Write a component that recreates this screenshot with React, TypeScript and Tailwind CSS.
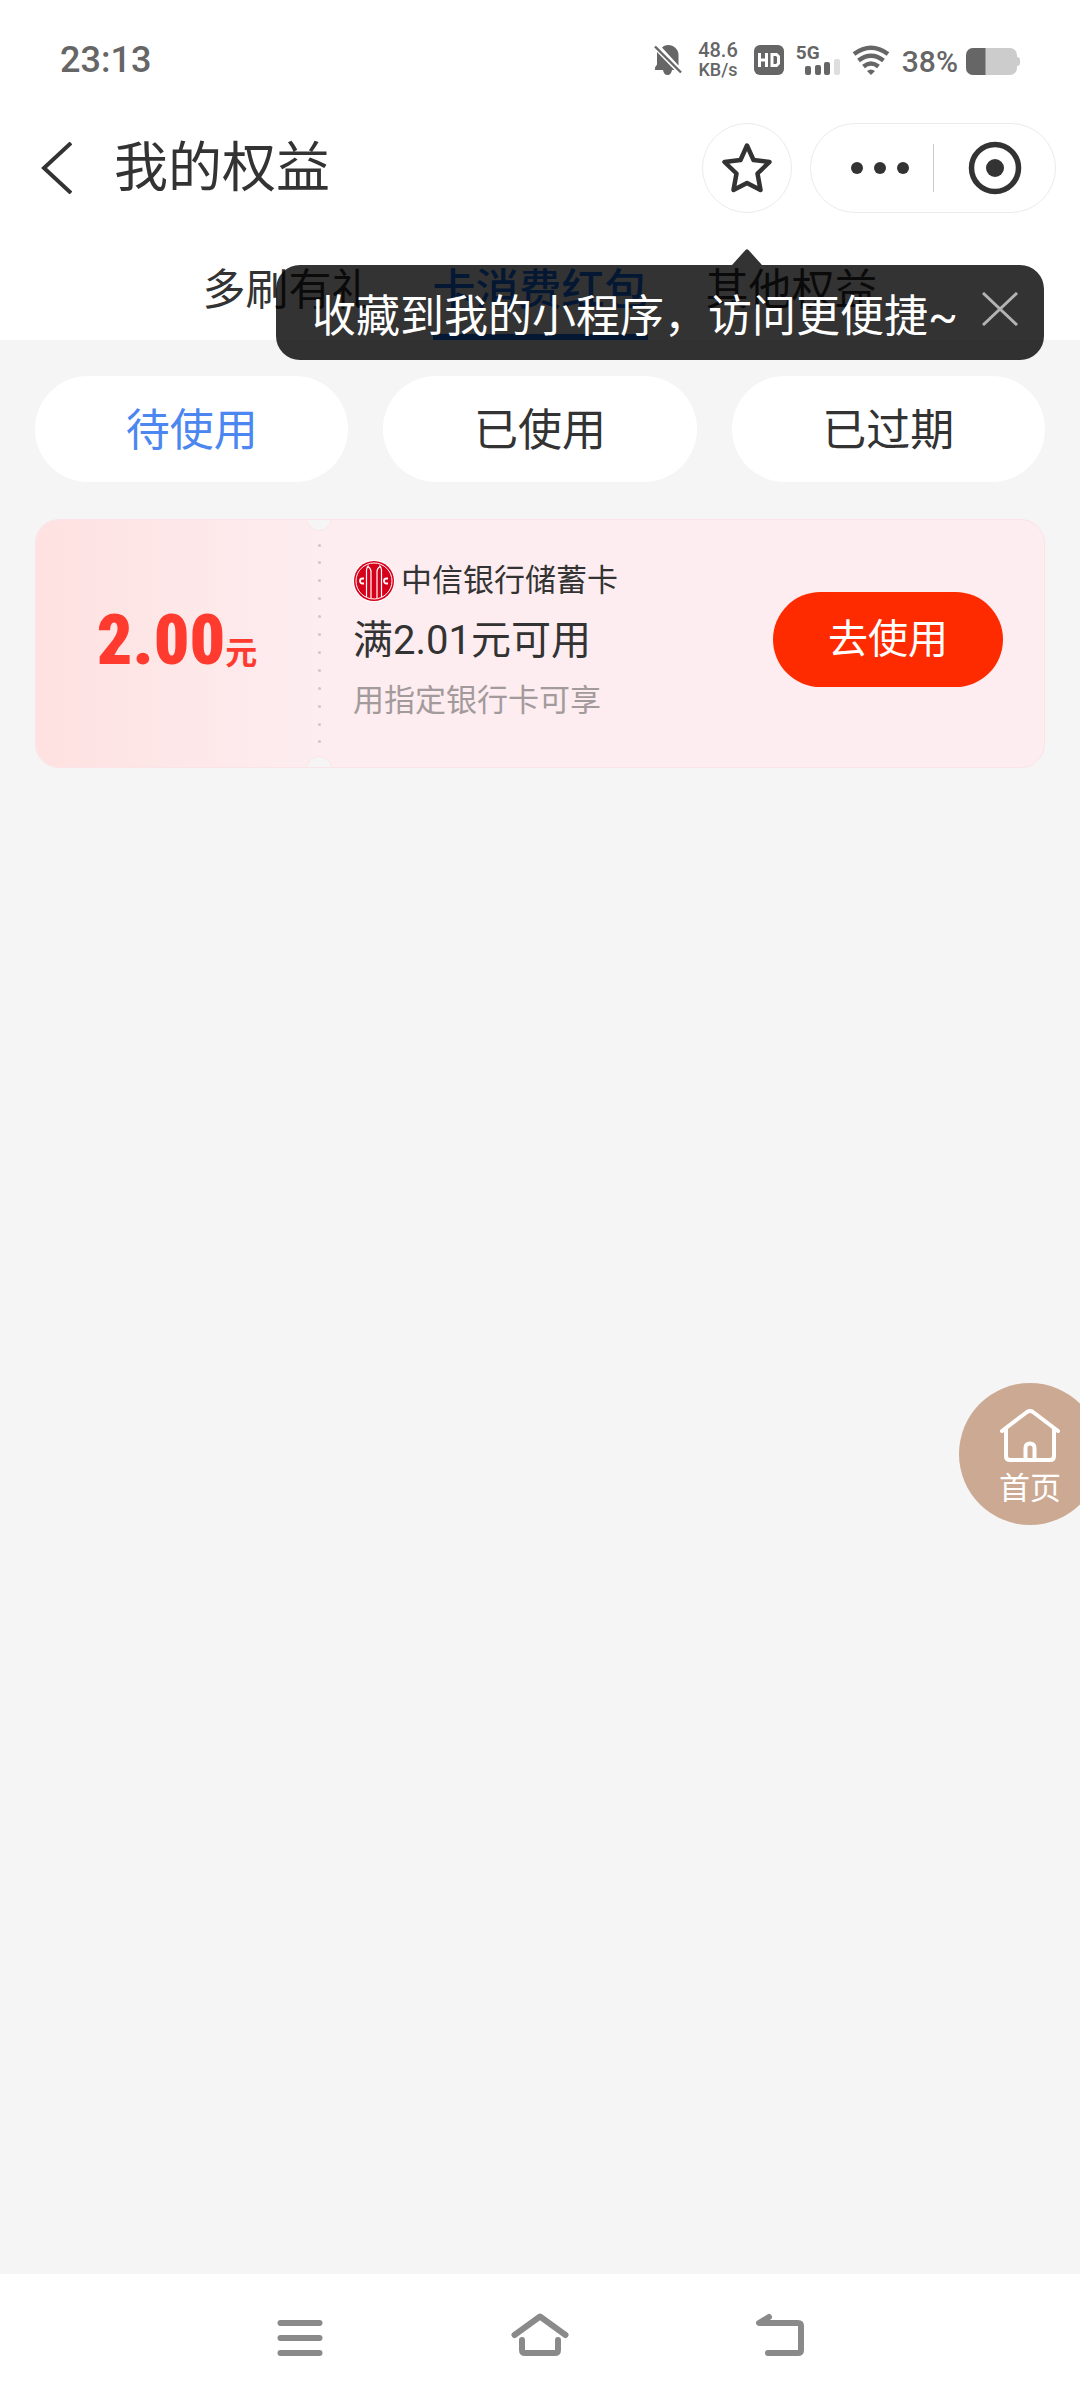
import React from "react";

const tabs = ["多刷有礼", "卡消费红包", "其他权益"];
const filters = ["待使用", "已使用", "已过期"];

function StatusBar() {
  return (
    <div className="flex h-[120px] items-center justify-between px-[60px] text-[#666]">
      <div className="text-[36px] font-medium leading-[36px]">23:13</div>
      <div className="flex items-center">
        <svg className="h-[32px] w-[28px]" viewBox="0 0 28 32" fill="currentColor" aria-hidden="true">
          <path d="M8 3.500C9.500 2 11.500 1 14 1c6 0 10.500 4.500 10.500 10v10.500Z" />
          <path d="M3 8 20.500 26H18c-.5 3-2 5-4.500 5S9.500 29 9 26H1v-2.500l2-3Z" />
          <path d="M1 2.500 27 28.500" stroke="currentColor" strokeWidth="2.400" />
        </svg>
        <div className="ml-4 flex flex-col items-center font-medium">
          <span className="text-[20px] leading-[20px]">48.6</span>
          <span className="text-[18px] leading-[20px]">KB/s</span>
        </div>
        <svg className="ml-4 h-[30px] w-[30px]" viewBox="0 0 30 30" aria-hidden="true">
          <rect width="30" height="30" rx="6" fill="currentColor" />
          <path d="M5.500 8v14M12.500 8v14M5.500 15h7M18 9.500h4.500l2 2v7l-2 2H18Z" fill="none" stroke="#fff" strokeWidth="3" />
        </svg>
        <div className="relative ml-3 h-[30px] w-[44px]">
          <span className="absolute left-0 top-0 text-[19px] font-bold leading-[16px]">5G</span>
          <svg className="h-[30px] w-[44px]" viewBox="0 0 44 30" fill="currentColor" aria-hidden="true">
            <rect x="9" y="21" width="6" height="9" rx="2" />
            <rect x="19" y="20" width="6" height="10" rx="2" />
            <rect x="28" y="17" width="6" height="13" rx="2" />
            <rect x="38" y="14" width="6" height="16" rx="2" fill="#dedede" />
          </svg>
        </div>
        <svg className="ml-3 h-[30px] w-[38px]" viewBox="0 0 38 30" fill="none" stroke="currentColor" strokeWidth="4.400" aria-hidden="true">
          <path d="M2 9Q19-3.500 36 9M6.500 15.500q12.500-9.500 25 0M11.500 21.500q7.500-6 15 0" />
          <path d="M15 26q4-3 8 0l-4 4Z" fill="currentColor" stroke="none" />
        </svg>
        <span className="ml-3 mt-1 text-[30px] font-medium leading-[30px]">38%</span>
        <svg className="ml-2 mt-1 h-[28px] w-[54px]" viewBox="0 0 54 28" aria-hidden="true">
          <rect x="48" y="9" width="6" height="9" rx="3" fill="#ccc" />
          <rect y="0" width="51" height="27" rx="7" fill="#ccc" />
          <path d="M19.500 0H7a7 7 0 0 0-7 7v13a7 7 0 0 0 7 7h12.500Z" fill="currentColor" />
        </svg>
      </div>
    </div>
  );
}

function Tip() {
  return (
    <div role="status" className="absolute right-9 top-[265px] z-10 flex h-[95px] items-center rounded-[24px] bg-black/80 pl-9 pr-[26px]">
      <svg className="absolute -top-4 right-[282px] h-4 w-[30px]" viewBox="0 0 30 16" aria-hidden="true">
        <path d="M0 16 13.500 1q1.500-1.500 3 0L30 16Z" fill="#000" fillOpacity=".8" />
      </svg>
      <p className="mt-2 whitespace-nowrap text-[44px] leading-[60px] text-white">收藏到我的小程序，访问更便捷~</p>
      <button type="button" aria-label="关闭" className="-mt-2 ml-6 text-[#b3b3b3]">
        <svg className="h-[34px] w-[36px]" viewBox="0 0 36 34" fill="none" stroke="currentColor" strokeWidth="3" aria-hidden="true">
          <path d="m1 1 34 32M35 1 1 33" />
        </svg>
      </button>
    </div>
  );
}

function Header() {
  return (
    <header className="bg-white">
      <StatusBar />
      <div className="mt-[3px] flex h-[90px] items-center pl-10 pr-6">
        <button type="button" aria-label="返回">
          <svg className="h-[52px] w-[32px]" viewBox="0 0 32 52" fill="none" stroke="currentColor" strokeWidth="4" aria-hidden="true">
            <path d="M31 1 4 26l27 25" />
          </svg>
        </button>
        <h1 className="ml-[42px] flex-1 pt-0.5 text-[54px] leading-[72px]">我的权益</h1>
        <button type="button" aria-label="收藏" className="flex size-[90px] items-center justify-center rounded-full border border-[#ebebeb]">
          <svg className="size-[52px]" viewBox="0 0 52 52" fill="none" stroke="currentColor" strokeWidth="4.500" strokeLinejoin="round" aria-hidden="true">
            <path d="m26 3.500 6.500 14.500 16 2-12 11.500L39.500 48 26 41 12.500 48l3-16.500L3.500 20l16-2Z" />
          </svg>
        </button>
        <div className="ml-[18px] flex h-[90px] w-[246px] items-center rounded-full border border-[#ebebeb]">
          <button type="button" aria-label="更多" className="flex w-1/2 justify-center gap-[11px] pl-4">
            <i className="size-[12px] rounded-full bg-[#333]" />
            <i className="size-[12px] rounded-full bg-[#333]" />
            <i className="size-[12px] rounded-full bg-[#333]" />
          </button>
          <i className="h-12 w-px bg-[#ccc]" />
          <button type="button" aria-label="关闭小程序" className="flex flex-1 justify-center">
            <svg className="size-[54px]" viewBox="0 0 54 54" aria-hidden="true">
              <circle cx="27" cy="27" r="23.500" fill="none" stroke="currentColor" strokeWidth="5.500" />
              <circle cx="27" cy="27" r="9" fill="currentColor" />
            </svg>
          </button>
        </div>
      </div>
      <nav className="mt-[41px] flex justify-center gap-[58px]">
        {tabs.map((tab, i) => (
          <a
            key={tab}
            href="#"
            aria-current={i === 1 ? "page" : undefined}
            className={
              i === 1
                ? "h-[86px] border-b-[6px] border-[#1677ff] pt-1.5 text-[43px] leading-[60px] font-medium text-[#1677ff]"
                : "h-[86px] pt-1.5 text-[43px] leading-[60px]"
            }
          >
            {tab}
          </a>
        ))}
      </nav>
    </header>
  );
}

function BankLogo() {
  return (
    <svg className="size-[42px]" viewBox="0 0 42 42" aria-hidden="true">
      <circle cx="21" cy="21" r="21" fill="#fff" />
      <circle cx="21" cy="21" r="20" fill="#d7001b" />
      <circle cx="21" cy="21" r="18" fill="none" stroke="#fff" strokeWidth="1" />
      <path d="M13.500 37V10q0-2.500 2-4.500M28.500 37V10q0-2.500-2-4.500M18 38.500V11.500q0-3-3-5M24 38.500V11.500q0-3 3-5" fill="none" stroke="#fff" strokeWidth="1.200" />
      <path d="M11 18.500H9.500a2.500 2.500 0 0 0 0 5H11M35 18.500h-1.500a2.500 2.500 0 0 0 0 5H35" fill="none" stroke="#fff" strokeWidth="1.800" />
    </svg>
  );
}

function Coupon() {
  return (
    <article className="relative mt-[37px] flex h-[249px] items-center overflow-hidden rounded-[24px] border border-[#fbe4e7] bg-[#fdedf0]">
      <div className="flex h-full w-[282px] items-center justify-center bg-linear-to-r from-[#fee1e0] to-[#fdedf0] pb-2 text-[#ff3b30]">
        <p className="flex items-baseline">
          <span className="font-['Roboto_Condensed','Liberation_Sans_Narrow',Roboto] text-[70px] font-black leading-[72px]">2.00</span>
          <span className="text-[32px] font-bold leading-[40px]">元</span>
        </p>
      </div>
      <i className="absolute -top-[15px] left-[270px] size-[26px] rounded-full border border-[#fbe4e7] bg-[#f5f5f5]" />
      <i className="absolute -bottom-[15px] left-[270px] size-[26px] rounded-full border border-[#fbe4e7] bg-[#f5f5f5]" />
      <div className="flex h-[200px] w-[3px] flex-col justify-between">
        {Array.from({ length: 12 }, (_, i) => (
          <i key={i} className="size-[3px] rounded-full bg-[#d9c3c8]" />
        ))}
      </div>
      <div className="flex-1 pb-1.5 pl-8">
        <div className="flex h-[60px] items-center gap-1.5">
          <BankLogo />
          <span className="text-[31px] leading-[60px]">中信银行储蓄卡</span>
        </div>
        <p className="text-[40px] leading-[60px]">满2.01元可用</p>
        <p className="text-[31px] leading-[60px] text-[#a39a9b]">用指定银行卡可享</p>
      </div>
      <button type="button" className="mb-2 mr-[41px] h-[95px] w-[230px] rounded-full bg-[#ff2b00] text-[40px] leading-[60px] text-white">
        去使用
      </button>
    </article>
  );
}

function SystemNav() {
  return (
    <nav className="grid h-[126px] grid-cols-3 items-center bg-white px-[180px] pb-1 text-[#8a8a8a]">
      <button type="button" aria-label="最近任务" className="flex justify-center">
        <svg className="h-[46px] w-[60px]" viewBox="0 0 60 46" fill="none" stroke="currentColor" strokeWidth="6" strokeLinecap="round" aria-hidden="true">
          <path d="M10.500 11h39M10.500 26h39M10.500 41h39" />
        </svg>
      </button>
      <button type="button" aria-label="主屏幕" className="flex justify-center">
        <svg className="h-[46px] w-[60px]" viewBox="0 0 60 46" fill="none" stroke="currentColor" strokeWidth="6" strokeLinecap="round" strokeLinejoin="round" aria-hidden="true">
          <path d="M4.500 23 30 4.500 55.500 23M12 28v10q0 3 3 3h30q3 0 3-3V28" />
        </svg>
      </button>
      <button type="button" aria-label="返回上一页" className="flex justify-center">
        <svg className="h-[46px] w-[60px]" viewBox="0 0 60 46" fill="none" stroke="currentColor" strokeWidth="6" strokeLinecap="round" strokeLinejoin="round" aria-hidden="true">
          <path d="M19 5 9 11h39q3 0 3 3v24q0 3-3 3H18" />
        </svg>
      </button>
    </nav>
  );
}

export default function App() {
  return (
    <div className="relative flex min-h-screen flex-col overflow-hidden bg-[#f5f5f5] font-[Roboto,'Noto_Sans_CJK_SC',sans-serif] text-[#333]">
      <Header />
      <Tip />
      <main className="flex-1 px-[35px] pt-9">
        <div className="flex gap-[35px]">
          {filters.map((name, i) => (
            <button
              key={name}
              type="button"
              aria-pressed={i === 0}
              className={
                i === 0
                  ? "h-[106px] flex-1 rounded-full bg-white pt-1 text-[44px] leading-[60px] text-[#4c86f0]"
                  : "h-[106px] flex-1 rounded-full bg-white pt-1 text-[44px] leading-[60px]"
              }
            >
              {name}
            </button>
          ))}
        </div>
        <Coupon />
      </main>
      <a href="#" className="absolute -right-[21px] top-[1383px] flex size-[142px] flex-col items-center rounded-full bg-[#cca992] pt-6 text-white">
        <svg className="h-[56px] w-[62px]" viewBox="0 0 62 56" fill="none" stroke="currentColor" strokeWidth="4" strokeLinecap="round" strokeLinejoin="round" aria-hidden="true">
          <path d="M3 24 28 5q3-2 6 0l25 19M7 22v27q0 4 4 4h40q4 0 4-4V22" />
          <path d="M26.500 52V41q0-4.500 4.500-4.500t4.500 4.500v11" />
        </svg>
        <span className="text-[31px] leading-[52px]">首页</span>
      </a>
      <SystemNav />
    </div>
  );
}
